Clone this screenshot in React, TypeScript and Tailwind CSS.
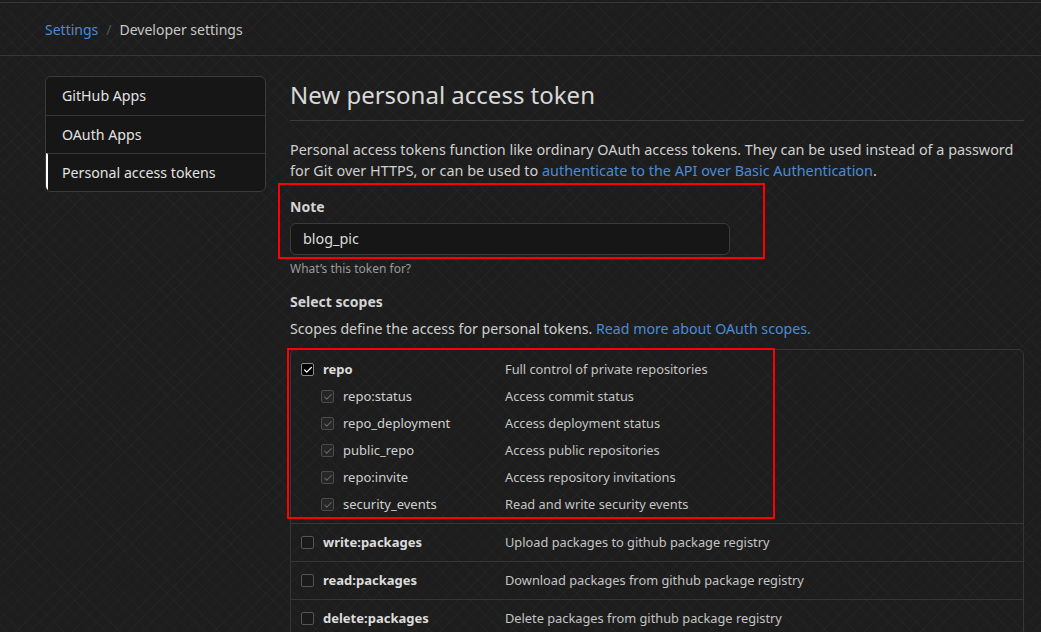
import { Check } from "lucide-react";

const NAV = [
  { id: "apps", label: "GitHub Apps" },
  { id: "oauth", label: "OAuth Apps" },
  { id: "tokens", label: "Personal access tokens", active: true },
];

const REPO_SCOPES = [
  { name: "repo:status", desc: "Access commit status" },
  { name: "repo_deployment", desc: "Access deployment status" },
  { name: "public_repo", desc: "Access public repositories" },
  { name: "repo:invite", desc: "Access repository invitations" },
  { name: "security_events", desc: "Read and write security events" },
];

const PACKAGE_SCOPES = [
  { name: "write:packages", desc: "Upload packages to github package registry" },
  { name: "read:packages", desc: "Download packages from github package registry" },
  { name: "delete:packages", desc: "Delete packages from github package registry" },
];

function Box({ state }: { state: "on" | "muted" | "off" }) {
  if (state === "on")
    return (
      <span className="flex h-[13px] w-[13px] items-center justify-center rounded-[2px] border border-[#8a8a8a] bg-black">
        <Check className="h-[10px] w-[10px] text-white" strokeWidth={3} />
      </span>
    );
  if (state === "muted")
    return (
      <span className="flex h-[13px] w-[13px] items-center justify-center rounded-[2px] border border-[#4a4a4a] bg-[#262626]">
        <Check className="h-[10px] w-[10px] text-[#6a6a6a]" strokeWidth={2.5} />
      </span>
    );
  return <span className="block h-[13px] w-[13px] rounded-[2px] border border-[#555] bg-[#1a1a1a]" />;
}

export default function App() {
  return (
    <div
      className="min-h-screen bg-[#1d1d1d] bg-[repeating-linear-gradient(45deg,transparent_0_9px,rgba(255,255,255,0.018)_9px_10px),repeating-linear-gradient(-45deg,transparent_0_9px,rgba(255,255,255,0.018)_9px_10px)] pt-[2px] text-[14px] text-[#cdcdcd]"
      style={{ fontFamily: '"Noto Sans", "Open Sans", sans-serif' }}
    >
      <div className="flex h-[54px] items-center border-y border-[#363636] px-[45px] text-[14px]">
        <a href="#" className="text-[#4a8bd6]">Settings</a>
        <span className="mx-[8px] text-[#555]">/</span>
        <span className="text-[#c8c8c8]">Developer settings</span>
      </div>

      <div className="flex gap-[24px] pl-[45px] pr-[17px] pt-[20px]">
        <nav className="h-fit w-[221px] shrink-0 overflow-hidden rounded-md border border-[#3a3a3a] bg-[#161616]">
          {NAV.map((item, i) => (
            <div
              key={item.id}
              className={`flex h-[38px] items-center px-[16px] text-[14.2px] text-[#e2e2e2] ${i > 0 ? "border-t border-[#363636]" : ""} ${
                item.active ? "border-l-2 border-l-white pl-[14px]" : ""
              }`}
            >
              {item.label}
            </div>
          ))}
        </nav>

        <main className="min-w-0 flex-1">
          <h1 className="border-b border-[#3a3a3a] pb-[10px] pt-[4px] text-[24px] font-normal leading-[30px] text-[#d8d8d8]">
            New personal access token
          </h1>

          <p className="mt-[18px] text-[14.4px] leading-[21px] text-[#cfcfcf]">
            Personal access tokens function like ordinary OAuth access tokens. They can be used instead of a password
            <br />
            for Git over HTTPS, or can be used to{" "}
            <a href="#" className="text-[#4a8bd6]">authenticate to the API over Basic Authentication</a>.
          </p>

          <div className="relative mt-[15px]">
            <span className="pointer-events-none absolute left-[-12px] top-[-13px] h-[76px] w-[487px] border-2 border-[#ff0000]" />
            <label className="block font-bold leading-[21px] text-[#d4d4d4]">Note</label>
            <div className="mt-[6px] flex h-[32px] w-[440px] items-center rounded-md border border-[#3a3a3a] bg-[#161616] px-[12px] text-[14.4px] text-[#dcdcdc]">
              blog_pic
            </div>
            <p className="mt-[5px] text-[12px] leading-[18px] text-[#9a9a9a]">What’s this token for?</p>
          </div>

          <h3 className="mt-[13px] font-bold leading-[21px] text-[#d4d4d4]">Select scopes</h3>
          <p className="mt-[6px] text-[14.2px] leading-[21px] text-[#cfcfcf]">
            Scopes define the access for personal tokens.{" "}
            <a href="#" className="text-[#4a8bd6]">Read more about OAuth scopes.</a>
          </p>

          <div className="relative mt-[10px] rounded-md border border-[#363636] text-[13px]">
            <span className="pointer-events-none absolute left-[-4px] top-[-2px] h-[171px] w-[488px] border-2 border-[#ff0000]" />
            <div className="pb-[5px] pt-[6px]">
              <div className="flex h-[27px] items-center pl-[10px]">
                <Box state="on" />
                <span className="ml-[9px] w-[182px] font-bold text-[#dcdcdc]">repo</span>
                <span className="text-[12.8px] text-[#c4c4c4]">Full control of private repositories</span>
              </div>
              {REPO_SCOPES.map((s) => (
                <div key={s.name} className="flex h-[27px] items-center pl-[30px]">
                  <Box state="muted" />
                  <span className="ml-[9px] w-[162px] text-[#d0d0d0]">{s.name}</span>
                  <span className="text-[12.8px] text-[#c4c4c4]">{s.desc}</span>
                </div>
              ))}
            </div>
            {PACKAGE_SCOPES.map((s) => (
              <div key={s.name} className="flex h-[38px] items-center border-t border-[#363636] pl-[10px]">
                <Box state="off" />
                <span className="ml-[9px] w-[182px] font-bold text-[#dcdcdc]">{s.name}</span>
                <span className="text-[12.8px] text-[#c4c4c4]">{s.desc}</span>
              </div>
            ))}
          </div>
        </main>
      </div>
    </div>
  );
}
